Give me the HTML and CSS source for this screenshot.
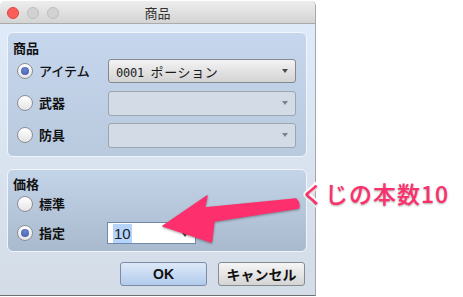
FILE: index.html
```html
<!DOCTYPE html>
<html lang="ja">
<head>
<meta charset="utf-8">
<title>商品</title>
<link rel="stylesheet" href="styles.css">
</head>
<body>
<div class="window">
  <div class="titlebar">
    <div class="lights">
      <span class="light red"></span>
      <span class="light"></span>
      <span class="light"></span>
    </div>
    <div class="title">商品</div>
  </div>
  <div class="content">
    <div class="group g1">
      <div class="legend">商品</div>
      <div class="row first">
        <div class="rlabel"><span class="radio checked"></span><span class="kana">アイテム</span></div>
        <div class="combo"><span class="ctext"><span class="mono">0001</span> ポーション</span><span class="caret"></span></div>
      </div>
      <div class="row">
        <div class="rlabel"><span class="radio"></span><span class="kanji">武器</span></div>
        <div class="combo disabled"><span class="ctext"></span><span class="caret"></span></div>
      </div>
      <div class="row">
        <div class="rlabel"><span class="radio"></span><span class="kanji">防具</span></div>
        <div class="combo disabled"><span class="ctext"></span><span class="caret"></span></div>
      </div>
    </div>
    <div class="group g2">
      <div class="legend">価格</div>
      <div class="row first short">
        <div class="rlabel narrow"><span class="radio"></span><span class="kanji">標準</span></div>
      </div>
      <div class="row mid">
        <div class="rlabel narrow"><span class="radio checked"></span><span class="kanji">指定</span></div>
        <div class="spin"><span class="sel">10</span><span class="caret"></span></div>
      </div>
    </div>
    <div class="buttons">
      <button class="btn default">OK</button>
      <button class="btn">キャンセル</button>
    </div>
  </div>
</div>
<svg class="arrow" width="463" height="297" viewBox="0 0 463 297">
  <path d="M163 226 L207 196 L204.5 208 L296 199 Q300 203 298.5 208 L214 221 L211.5 242 Z" fill="#fd2f6d" stroke="#fd2f6d" stroke-width="1.5" stroke-linejoin="round"/>
</svg>
<div class="note">くじの本数10</div>
</body>
</html>
```

FILE: styles.css
```css
html, body {
  margin: 0;
  padding: 0;
}
body {
  width: 463px;
  height: 297px;
  overflow: hidden;
  position: relative;
  background: #ffffff;
  font-family: "Noto Sans CJK JP", "Noto Sans", sans-serif;
  color: #111;
}
.window {
  box-sizing: border-box;
  width: 316px;
  height: 295px;
  margin-top: 1px;
  border-right: 1px solid #a4a8ad;
  border-bottom: 1px solid #6e7074;
  border-radius: 5px 5px 0 0;
  background: linear-gradient(#e0ecfb, #d3dce7);
  display: flex;
  flex-direction: column;
  overflow: hidden;
}
.titlebar {
  box-sizing: border-box;
  height: 23px;
  flex: none;
  background: linear-gradient(#ededed, #d4d4d4);
  border-bottom: 1px solid #ababab;
  display: flex;
  align-items: center;
  position: relative;
  padding-top: 1px;
}
.lights {
  display: flex;
  gap: 8px;
  padding-left: 7px;
}
.light {
  width: 12px;
  height: 12px;
  box-sizing: border-box;
  border-radius: 50%;
  background: #d2d2d2;
  border: 1px solid #bebebe;
}
.light.red {
  background: #fc5d58;
  border-color: #df4744;
}
.title {
  position: absolute;
  left: 0;
  right: 0;
  top: 1px;
  bottom: 0;
  display: flex;
  align-items: center;
  justify-content: center;
  font-size: 13px;
  color: #333;
}
.content {
  flex: 1;
  display: flex;
  flex-direction: column;
  padding: 8px 8px 0 7px;
}
.group {
  box-sizing: border-box;
  width: 300px;
  border: 1px solid #f1f5fb;
  border-radius: 6px;
  padding-left: 5px;
  display: flex;
  flex-direction: column;
}
.g1 {
  height: 125px;
  padding-top: 7px;
  background: linear-gradient(#c6d6ec, #b9c9de);
}
.g2 {
  height: 83px;
  margin-top: 12px;
  padding-top: 6px;
  background: linear-gradient(#c3d3e8, #a9bace);
}
.legend {
  height: 16px;
  line-height: 16px;
  font-size: 13px;
  font-weight: 700;
  color: #111;
}
.row {
  display: flex;
  align-items: center;
  height: 24px;
  margin-top: 8px;
  padding-left: 4px;
}
.row.first {
  margin-top: 3px;
}
.row.short {
  height: 18px;
}
.row.mid {
  height: 22px;
  margin-top: 9px;
}
.rlabel {
  width: 91px;
  flex: none;
  display: flex;
  align-items: center;
  gap: 6px;
  font-size: 13px;
  line-height: 16px;
}
.rlabel.narrow {
  width: 90px;
}
.kana {
  font-weight: 500;
}
.kanji {
  font-weight: 700;
}
.radio {
  box-sizing: border-box;
  width: 16px;
  height: 16px;
  border-radius: 50%;
  border: 1px solid #8c8f94;
  background: linear-gradient(#ffffff, #e4e4e4);
  display: flex;
  align-items: center;
  justify-content: center;
  flex: none;
}
.radio.checked::after {
  content: "";
  width: 8px;
  height: 8px;
  border-radius: 50%;
  background: radial-gradient(circle at 50% 35%, #6a86cf, #3f5aab);
}
.combo {
  box-sizing: border-box;
  width: 188px;
  height: 24px;
  border: 1px solid #858a90;
  border-radius: 3px;
  background: linear-gradient(#f3f3f3, #d3d3d3);
  display: flex;
  align-items: center;
  justify-content: space-between;
  padding: 0 7px 0 7px;
  font-size: 13px;
}
.combo.disabled {
  height: 25px;
  background: #d3dbe7;
  border-color: #9ca4b0;
}
.ctext {
  color: #1a1a1a;
  letter-spacing: 0.6px;
  white-space: pre;
}
.mono {
  font-family: "DejaVu Sans Mono", monospace;
  font-size: 12px;
  letter-spacing: -0.2px;
  margin-right: 3px;
}
.caret {
  width: 0;
  height: 0;
  border-left: 3.5px solid transparent;
  border-right: 3.5px solid transparent;
  border-top: 4px solid #4a4a4a;
}
.combo.disabled .caret {
  border-top-color: #7d8288;
}
.spin {
  box-sizing: border-box;
  width: 89px;
  height: 22px;
  background: #ffffff;
  border: 1px solid #7088ac;
  display: flex;
  align-items: center;
  justify-content: space-between;
  padding: 0 7px 0 5px;
  font-family: "Liberation Sans", Arial, sans-serif;
  font-size: 15px;
}
.sel {
  background: #b4d4fc;
  color: #222;
  line-height: 19px;
  padding: 0 1px;
}
.spin .caret {
  margin-top: 4px;
}
.buttons {
  display: flex;
  justify-content: flex-end;
  gap: 11px;
  margin-top: 10px;
  padding-right: 2px;
}
.btn {
  box-sizing: border-box;
  width: 87px;
  height: 24px;
  margin: 0;
  padding: 0;
  border: 1px solid #868b92;
  border-radius: 3px;
  background: linear-gradient(#f6f6f6, #d4d4d4);
  font-family: "Noto Sans CJK JP", sans-serif;
  font-size: 14px;
  font-weight: 700;
  color: #111;
  line-height: 20px;
}
.btn.default {
  background: linear-gradient(#dde9f9, #b2cbec);
  border-color: #7d8ca3;
  font-family: "Liberation Sans", Arial, sans-serif;
  font-size: 14px;
}
.arrow {
  position: absolute;
  left: 0;
  top: 0;
  filter: drop-shadow(0 1px 1.2px rgba(0, 0, 0, 0.35));
}
.note {
  position: absolute;
  left: 301px;
  top: 180px;
  font-size: 23px;
  line-height: 26px;
  font-weight: 500;
  letter-spacing: 1px;
  color: #fd2f6d;
  -webkit-text-stroke: 4px #ffffff;
  paint-order: stroke fill;
  text-shadow: 0 1px 2px rgba(0, 0, 0, 0.35);
  white-space: nowrap;
}
```
